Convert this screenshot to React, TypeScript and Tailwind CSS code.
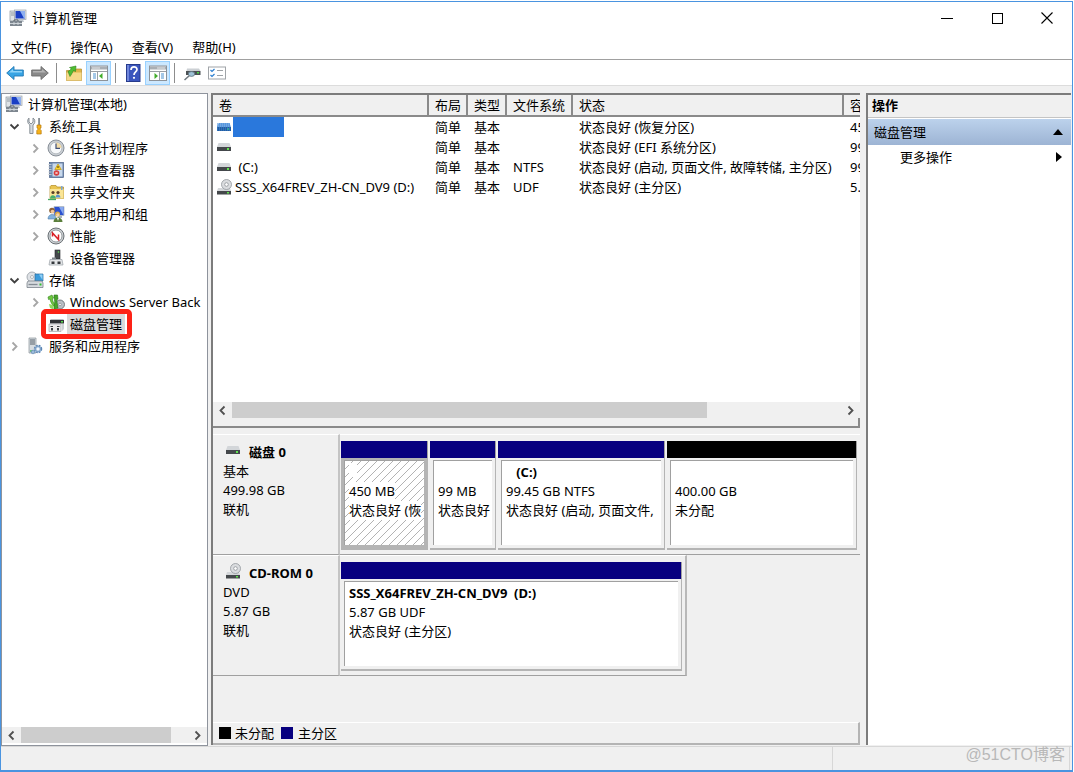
import type { ReactNode } from "react";
import clsx from "clsx";

type IconProps = { className?: string };

function Svg({ children, className = "h-[18px] w-[18px]" }: IconProps & { children: ReactNode }) {
  return (
    <svg viewBox="0 0 18 18" className={clsx("block shrink-0", className)} aria-hidden="true">
      {children}
    </svg>
  );
}

/* ---------- icons ---------- */

function ComputerIcon() {
  return (
    <Svg>
      <rect x="1" y="2" width="5" height="10" fill="#dfe3e6" stroke="#8b949c" strokeWidth=".7" />
      <path d="M2 4h3M2 6h3" stroke="#7a8590" strokeWidth=".8" />
      <rect x="5.500" y="1" width="11.500" height="9.500" fill="#e3e6e9" stroke="#9aa3ab" strokeWidth=".7" />
      <rect x="6.500" y="2" width="9.500" height="7.500" fill="#1a3fc4" />
      <path d="M11 2h5v7.500h-1z" fill="#8fb0f0" />
      <path d="M9 10.500h5l1 2.500H8z" fill="#bfc6cc" />
      <rect x="1" y="12" width="12" height="5" fill="#7d868f" />
      <path d="M5 12v-1h4v1" fill="none" stroke="#596169" />
      <path d="M1 14.500h12M5 13v3M9 13v3" stroke="#d5dadf" strokeWidth=".9" />
    </Svg>
  );
}

function ToolsIcon() {
  return (
    <Svg>
      <path d="M3 1v4l2 2 2-2V1c2 1 2.500 4 1 6L7 8v8.500H3.800V8C1 6 1.200 2.500 3 1z" fill="#d5dadf" stroke="#737c84" strokeWidth=".8" />
      <path d="M12.300 1h1.500v7h-1.500z" fill="#6d757d" />
      <path d="M11 8h4v3h-.8v1.500l1 1V17h-4.400v-3.500l1-1V11H11z" fill="#f6b21a" stroke="#b87a0b" strokeWidth=".7" />
    </Svg>
  );
}

function ClockIcon() {
  return (
    <Svg>
      <circle cx="9" cy="9" r="8" fill="#c9ced3" stroke="#7e868e" strokeWidth=".9" />
      <circle cx="9" cy="9" r="5.800" fill="#f7f9fb" stroke="#a2a9b0" strokeWidth=".6" />
      <path d="M9 9V3.500a5.500 5.500 0 0 1 5.500 5.500z" fill="#f3dca8" />
      <path d="M9 4.500V9.300h4" fill="none" stroke="#3f4f78" strokeWidth="1.200" />
    </Svg>
  );
}

function EventIcon() {
  return (
    <Svg>
      <rect x="2.500" y="1.500" width="14" height="15" fill="#6b87b0" stroke="#4a6288" strokeWidth=".7" />
      <rect x="5.500" y="2.500" width="10" height="13" fill="#c9d9ec" />
      <path d="M1.500 3.500h3M1.500 6h3M1.500 8.500h3M1.500 11h3M1.500 13.500h3" stroke="#c1c8cf" />
      <path d="M11 3l3.300 5.500H7.800z" fill="#ffd42a" stroke="#b98a00" strokeWidth=".6" />
      <path d="M11 5v2" stroke="#463600" />
      <circle cx="9.500" cy="12" r="2.800" fill="#d93a3a" />
      <path d="M8.400 10.900l2.200 2.200m0-2.200l-2.200 2.200" stroke="#fff" strokeWidth=".8" />
    </Svg>
  );
}

function SharedFolderIcon() {
  return (
    <Svg>
      <path d="M3 3.500l1-1h5l1 1.500h6.500v11.500H3z" fill="#e9c552" stroke="#b28b23" strokeWidth=".7" />
      <path d="M3 6h13.500v9.500H3z" fill="#fae596" />
      <path d="M14 3h1.500v4H14z" fill="#7ba7d8" />
      <circle cx="6" cy="9.500" r="1.600" fill="#5a4029" />
      <circle cx="11" cy="9.500" r="1.600" fill="#5a4029" />
      <path d="M3 15.500c0-4.500 5.500-4.500 6 0z" fill="#46b06d" />
      <path d="M8.500 14.500c0-4 4.500-4 5 0z" fill="#5b93cf" />
      <path d="M1 16.500h8" stroke="#47a860" strokeWidth="1.300" />
    </Svg>
  );
}

function UsersIcon() {
  return (
    <Svg>
      <path d="M7 1.500h10v9H7z" fill="#2a50cf" stroke="#b7bfc7" strokeWidth=".9" />
      <path d="M12 2h4.500v8z" fill="#87a8ef" />
      <path d="M11 11h4v2h-4z" fill="#aab2ba" />
      <circle cx="5" cy="5.500" r="2.800" fill="#8b6239" />
      <circle cx="5.500" cy="6.500" r="1.800" fill="#f0c79c" />
      <path d="M1 14c0-6 8-6 8 0z" fill="#84b2dd" stroke="#4a7baa" strokeWidth=".6" />
      <circle cx="10.500" cy="9" r="2.500" fill="#d8aa48" />
      <circle cx="10.800" cy="9.800" r="1.600" fill="#f3d2aa" />
      <path d="M6.500 17c0-6 9-6 9 0z" fill="#5b7f3c" />
      <path d="M10 13h2l-1 3z" fill="#fff" />
    </Svg>
  );
}

function PerformanceIcon() {
  return (
    <Svg>
      <circle cx="9" cy="9" r="8" fill="#cfd3d6" stroke="#696f74" strokeWidth="1" />
      <circle cx="9" cy="9" r="6" fill="#fff" stroke="#7f868c" strokeWidth=".8" />
      <path d="M5.500 9.500V6l6 6.500V7.500" fill="none" stroke="#d91f26" strokeWidth="1.500" />
    </Svg>
  );
}

function DeviceIcon() {
  return (
    <Svg>
      <rect x="8" y="1" width="5" height="9" fill="#45494d" stroke="#24272a" strokeWidth=".6" />
      <circle cx="11.500" cy="3" r=".8" fill="#5be050" />
      <path d="M5 8.500h4V11H5z" fill="#80878e" />
      <path d="M3 10.500h12l1 5.500H2z" fill="#e4e6e8" stroke="#9aa0a6" strokeWidth=".7" />
      <path d="M4.500 12.500h3V15h-3zM10.500 12.500h3V15h-3z" fill="#34383c" />
    </Svg>
  );
}

function StorageIcon() {
  return (
    <Svg>
      <circle cx="6" cy="6" r="5" fill="#dfe2e6" stroke="#969da4" strokeWidth=".8" />
      <circle cx="6" cy="6" r="1.500" fill="#fff" stroke="#969da4" strokeWidth=".7" />
      <path d="M9 3h8v7H9z" fill="#3b9bdb" stroke="#2a6c9e" strokeWidth=".7" />
      <path d="M13 3.500h3.500V9z" fill="#90cff5" />
      <path d="M2 10h14l1 2v4.500H1V12z" fill="#d6dade" stroke="#7b838b" strokeWidth=".8" />
      <path d="M2.500 13.500h9" stroke="#848c94" strokeWidth="1.300" />
      <path d="M13.500 12.500h2v2h-2z" fill="#2fbf2f" />
    </Svg>
  );
}

function BackupIcon() {
  return (
    <Svg>
      <circle cx="13" cy="11.500" r="4.500" fill="#b9bfc5" stroke="#5f666d" strokeWidth=".8" />
      <circle cx="13" cy="11.500" r="1.300" fill="#fff" stroke="#70777d" strokeWidth=".6" />
      <path d="M1 4l4-2 1.500 3-1 .5c0 2.500 1 4.500 3 6.500L8 14C5 12 3.500 9 3 6L1.500 6.500z" fill="#6fc93f" stroke="#32811c" strokeWidth=".6" />
      <path d="M7 2h3.500l.5 4-1.300 1 1.300 8-4 1.500V13c1-3 .8-6 0-8z" fill="#47a52a" stroke="#2c7219" strokeWidth=".6" />
      <path d="M2 11l4 1 .5 4.500L3 15z" fill="#91da5f" />
    </Svg>
  );
}

function DiskMgmtIcon() {
  return (
    <Svg>
      <path d="M4 4h12l1 1H3z" fill="#b9bec3" />
      <rect x="3" y="5" width="14" height="3.500" fill="#303336" />
      <path d="M14 6h2v1.500h-2z" fill="#55d94c" />
      <path d="M2 9h12v7.500H2z" fill="#ececec" stroke="#a4a8ac" strokeWidth=".7" />
      <path d="M3.500 11h2.500v1H3.500zM4 13h2v2.500H4zM10 11h2.500v1H10zM10 13h2v2.500h-2z" fill="#3b3f42" />
      <path d="M15 9h2v5l-2 2z" fill="#ccd0d4" />
    </Svg>
  );
}

function ServicesIcon() {
  return (
    <Svg>
      <path d="M3 1h7v15H3z" fill="#d6dce1" stroke="#89929a" strokeWidth=".7" />
      <path d="M4 3h5M4 5h5M4 7h5" stroke="#56616b" />
      <path d="M4 14h3" stroke="#35b335" strokeWidth="1.200" />
      <circle cx="12" cy="12" r="3.500" fill="#b9d2ec" stroke="#5d86b4" strokeWidth="1.500" strokeDasharray="1.800 1" />
      <circle cx="12" cy="12" r="2.500" fill="#cfe0f2" stroke="#5d86b4" strokeWidth=".7" />
      <circle cx="12" cy="12" r="1" fill="#fff" />
      <circle cx="7" cy="15" r="1.800" fill="#9bbbdc" stroke="#5d86b4" strokeWidth=".6" />
    </Svg>
  );
}

function DriveIcon({ selected = false }: { selected?: boolean }) {
  return (
    <svg viewBox="0 0 16 10" className="block h-[10px] w-4 shrink-0" aria-hidden="true">
      <path d="M2.500 1h11L15 5H1z" fill={selected ? "#72a7e2" : "#d3d6d9"} />
      <rect x="1" y="5" width="14" height="4" fill={selected ? "#245c9e" : "#44484b"} />
      <rect x="11" y="6" width="2" height="2" fill={selected ? "#2aa889" : "#5fe24f"} />
      {selected && <path d="M1 2h14M1 4h14M1 6h14M1 8h14" stroke="#3d86d8" strokeDasharray="1 1" />}
    </svg>
  );
}

function OpticalIcon() {
  return (
    <svg viewBox="0 0 16 16" className="block h-4 w-4 shrink-0" aria-hidden="true">
      <path d="M2 9h12l1 3H1z" fill="#d3d6d9" />
      <rect x="1" y="12" width="14" height="3.500" fill="#44484b" />
      <rect x="11" y="13" width="2" height="1.500" fill="#5fe24f" />
      <circle cx="10.500" cy="5.500" r="5" fill="#dadcdf" stroke="#93989d" strokeWidth=".8" />
      <circle cx="10.500" cy="5.500" r="1.800" fill="#fff" stroke="#8d9297" strokeWidth=".8" />
    </svg>
  );
}

function BackIcon() {
  return (
    <Svg>
      <path d="M.7 9L8 2.500V6h9.300v6H8v3.500z" fill="#37a4e4" stroke="#2378b4" strokeWidth=".9" />
      <path d="M3 8.500l4-3.500v2h9v1.500z" fill="#8fd3f7" />
    </Svg>
  );
}

function ForwardIcon() {
  return (
    <Svg>
      <path d="M17.300 9L10 2.500V6H.7v6H10v3.500z" fill="#8a8a8a" stroke="#6b6b6b" strokeWidth=".9" />
      <path d="M15 8.500L11 5v2H2v1.500z" fill="#b4b4b4" />
    </Svg>
  );
}

function UpFolderIcon() {
  return (
    <Svg>
      <path d="M1.500 6.500h8L11 5h5.500v11.500h-15z" fill="#dfb54a" stroke="#b18a2c" strokeWidth=".7" />
      <path d="M1.500 8.500h15v8h-15z" fill="#f5d98a" />
      <path d="M5 12.500c1-1.500 2.300-3.500 3.500-6L10.500 7.500 11 2 4.500 3.500l1.700 1C5.500 6 4 7 3 7.500z" fill="#4fbd33" stroke="#2c851a" strokeWidth=".6" />
    </Svg>
  );
}

function PaneIcon({ flip = false }: { flip?: boolean }) {
  return (
    <Svg>
      <g transform={flip ? "translate(18 0) scale(-1 1)" : undefined}>
        <rect x=".5" y="2" width="17" height="14.500" fill="#fff" stroke="#8d9298" />
        <rect x="1" y="2.500" width="16" height="3" fill="#a9aeb3" />
        <path d="M2 4h8" stroke="#e4e7ea" />
        <path d="M1 7.500h16M7.500 8v8" stroke="#9a9fa5" />
        <path d="M3 10h3M3 12h3M3 14h3" stroke="#4b91cf" />
        <path d="M12.500 9v6L9 12z" fill="#42ad2b" />
      </g>
    </Svg>
  );
}

function HelpIcon() {
  return (
    <Svg>
      <rect x="2.500" y=".5" width="13.500" height="17" fill="#3a55bd" stroke="#263b8c" />
      <path d="M3 1h2v16H3z" fill="#6f86db" />
      <path d="M7 6c0-4 6-4 6-.5C13 8 10 8 10 11" fill="none" stroke="#fff" strokeWidth="1.700" />
      <circle cx="10" cy="13.800" r="1.100" fill="#fff" />
    </Svg>
  );
}

function RefreshDiskIcon() {
  return (
    <Svg>
      <path d="M4 4.500h12l1.500 2.500h-14z" fill="#ccd0d4" />
      <rect x="3" y="7" width="14.500" height="4" fill="#4b5054" />
      <path d="M14 8h2v1.500h-2z" fill="#4dd747" />
      <ellipse cx="8.500" cy="10" rx="3.200" ry="2.400" fill="#9fc3d8" stroke="#62737f" strokeWidth=".8" />
      <path d="M6.200 11.800L1.500 16" stroke="#6d767d" strokeWidth="1.500" />
    </Svg>
  );
}

function ChecklistIcon() {
  return (
    <Svg>
      <rect x=".5" y="3" width="17" height="12" fill="#fff" stroke="#a0a4a8" />
      <path d="M2.500 6l1.500 1.500L6.500 5M2.500 11L4 12.500 6.500 10" fill="none" stroke="#2c7fd0" strokeWidth="1.200" />
      <path d="M9 6.500h6M9 11.500h6" stroke="#9da2a6" />
    </Svg>
  );
}

function Chevron({ dir, className = "text-[#505050]" }: { dir: "left" | "right" | "down"; className?: string }) {
  const d = { left: "M7.500 1.500l-4 4 4 4", right: "M3.500 1.500l4 4-4 4", down: "M1.500 3.500l4 4 4-4" }[dir];
  return (
    <svg viewBox="0 0 11 11" className={clsx("block h-[11px] w-[11px]", className)} aria-hidden="true">
      <path d={d} fill="none" stroke="currentColor" strokeWidth="1.800" />
    </svg>
  );
}

/* ---------- data ---------- */

type TreeNode = { level: 0 | 1 | 2; label: string; icon: ReactNode; open?: boolean; leaf?: boolean; selected?: boolean };

const tree: TreeNode[] = [
  { level: 0, label: "计算机管理(本地)", icon: <ComputerIcon />, leaf: true },
  { level: 1, label: "系统工具", icon: <ToolsIcon />, open: true },
  { level: 2, label: "任务计划程序", icon: <ClockIcon /> },
  { level: 2, label: "事件查看器", icon: <EventIcon /> },
  { level: 2, label: "共享文件夹", icon: <SharedFolderIcon /> },
  { level: 2, label: "本地用户和组", icon: <UsersIcon /> },
  { level: 2, label: "性能", icon: <PerformanceIcon /> },
  { level: 2, label: "设备管理器", icon: <DeviceIcon />, leaf: true },
  { level: 1, label: "存储", icon: <StorageIcon />, open: true },
  { level: 2, label: "Windows Server Back", icon: <BackupIcon /> },
  { level: 2, label: "磁盘管理", icon: <DiskMgmtIcon />, leaf: true, selected: true },
  { level: 1, label: "服务和应用程序", icon: <ServicesIcon /> },
];

const volumes = [
  { name: "", fs: "", status: "状态良好 (恢复分区)", size: "45", selected: true },
  { name: "", fs: "", status: "状态良好 (EFI 系统分区)", size: "99" },
  { name: " (C:)", fs: "NTFS", status: "状态良好 (启动, 页面文件, 故障转储, 主分区)", size: "99" },
  { name: "SSS_X64FREV_ZH-CN_DV9 (D:)", fs: "UDF", status: "状态良好 (主分区)", size: "5.", optical: true },
];

type Partition = { grow: number; name?: string; size: string; status: string; free?: boolean; selected?: boolean };

const disk0: Partition[] = [
  { grow: 87, size: "450 MB", status: "状态良好 (恢", selected: true },
  { grow: 66, size: "99 MB", status: "状态良好" },
  { grow: 167, name: "   (C:)", size: "99.45 GB NTFS", status: "状态良好 (启动, 页面文件," },
  { grow: 190, size: "400.00 GB", status: "未分配", free: true },
];

const cdrom: Partition[] = [
  { grow: 1, name: "SSS_X64FREV_ZH-CN_DV9  (D:)", size: "5.87 GB UDF", status: "状态良好 (主分区)" },
];

/* ---------- pieces ---------- */

function ToolButton({ label, pressed, children }: { label: string; pressed?: boolean; children: ReactNode }) {
  return (
    <button
      type="button"
      aria-label={label}
      className={clsx("flex h-6 w-[25px] items-center justify-center", pressed && "border border-[#99d1ff] bg-[#cce8ff]")}
    >
      {children}
    </button>
  );
}

function Separator() {
  return <span className="mx-1 h-5 w-px bg-[#8d8d8d]" />;
}

function ScrollBar({ thumb }: { thumb: string }) {
  return (
    <div className="flex h-4 shrink-0 bg-[#f0f0f0]">
      <button type="button" aria-label="向左滚动" className="flex w-[19px] items-center justify-center">
        <Chevron dir="left" />
      </button>
      <div className="flex flex-1">
        <div className={clsx("bg-[#cdcdcd]", thumb)} />
      </div>
      <button type="button" aria-label="向右滚动" className="flex w-[19px] items-center justify-center">
        <Chevron dir="right" />
      </button>
    </div>
  );
}

function TreeRow({ node }: { node: TreeNode }) {
  return (
    <li className={clsx("relative flex h-[22px] items-center", node.level === 2 ? "pl-[25px]" : "pl-1")}>
      {node.level > 0 && (
        <span className="mr-[3px] flex w-[18px] shrink-0 justify-center">
          {!node.leaf && (
            <Chevron dir={node.open ? "down" : "right"} className={node.open ? "text-[#404040]" : "text-[#a6a6a6]"} />
          )}
        </span>
      )}
      {node.icon}
      <a
        href="#"
        className={clsx("ml-[2px] whitespace-nowrap px-[3px] leading-5", node.selected && "bg-[#d9d9d9]")}
      >
        {node.label}
      </a>
      {node.selected && (
        <span className="pointer-events-none absolute -top-1 left-10 h-[30px] w-[91px] rounded-[5px] border-[5px] border-[#fd2216]" />
      )}
    </li>
  );
}

function VolumeTable() {
  const head = "h-5 overflow-hidden border-b-2 border-[#8a8a8a] pl-[6px] text-left font-normal";
  const cell = "overflow-hidden p-0 pl-[6px]";
  return (
    <table className="w-full table-fixed border-separate border-spacing-0 whitespace-nowrap">
      <colgroup>
        <col className="w-[216px]" />
        <col className="w-[39px]" />
        <col className="w-[39px]" />
        <col className="w-[66px]" />
        <col className="w-[271px]" />
        <col />
      </colgroup>
      <thead className="bg-[#f0f0f0]">
        <tr>
          {["卷", "布局", "类型", "文件系统", "状态"].map((h) => (
            <th key={h} className={clsx(head, "border-r-2")}>{h}</th>
          ))}
          <th className={head}>容</th>
        </tr>
      </thead>
      <tbody>
        {volumes.map((v, i) => (
          <tr key={i} className="h-5">
            <td className="overflow-hidden p-0 pl-[3px]">
              <div className="flex h-5 items-center">
                {v.optical ? <OpticalIcon /> : <DriveIcon selected={v.selected} />}
                {v.selected ? (
                  <span className="ml-px h-5 w-[51px] bg-[#2a78dc]" />
                ) : (
                  <span className="whitespace-pre pl-[3px]">{v.name}</span>
                )}
              </div>
            </td>
            <td className={cell}>简单</td>
            <td className={cell}>基本</td>
            <td className={cell}>{v.fs}</td>
            <td className={cell}>{v.status}</td>
            <td className={cell}>{v.size}</td>
          </tr>
        ))}
      </tbody>
    </table>
  );
}

function Hatch() {
  return (
    <svg className="absolute inset-0 h-full w-full" aria-hidden="true">
      <defs>
        <pattern id="hatch" width="8" height="8" patternUnits="userSpaceOnUse">
          <path d="M-1 9L9-1M-1 1l2-2M7 9l2-2" stroke="#a0a0a0" strokeWidth=".8" />
        </pattern>
      </defs>
      <rect width="100%" height="100%" fill="url(#hatch)" />
    </svg>
  );
}

function PartitionBox({ part }: { part: Partition }) {
  return (
    <div className="flex min-w-0 basis-0 flex-col" style={{ flexGrow: part.grow }}>
      <div className={clsx("h-[17px] border-r border-[#a0a0a0]", part.free ? "bg-black" : "bg-[#08007f]")} />
      <div
        className={clsx(
          "flex flex-1 flex-col border-b-2 border-r border-[#b4b4b4] p-[3px] pt-[2px]",
          part.selected ? "bg-[#b4b4b4]" : "bg-[#f0f0f0]",
        )}
      >
        <div className="relative flex-1 overflow-hidden whitespace-pre border-l border-t border-[#a0a0a0] bg-white pl-1 pt-[2px] leading-[19px]">
          {part.selected && <Hatch />}
          <p className="relative h-[19px] font-bold">
            {part.name ?? <span className="inline-block h-[14px] w-2 bg-white" />}
          </p>
          <p className="relative">
            <span className="inline-block bg-white">{part.size}</span>
          </p>
          <p className="relative">
            <span className="inline-block bg-white">{part.status}</span>
          </p>
        </div>
      </div>
    </div>
  );
}

type DiskRowProps = { icon: ReactNode; name: string; lines: string[]; parts: Partition[]; narrow?: boolean };

function DiskRow({ icon, name, lines, parts, narrow }: DiskRowProps) {
  return (
    <section className="flex h-[121px]">
      <div className="w-[127px] shrink-0 border-b border-r-2 border-t border-b-[#a0a0a0] border-r-[#c4c4c4] border-t-white pl-[10px] pt-2 leading-[19px]">
        <h3 className="flex h-[19px] items-center font-bold">
          <span className="mb-[6px] mr-2 ml-[2px]">{icon}</span>
          {name}
        </h3>
        {lines.map((l) => (
          <p key={l}>{l}</p>
        ))}
      </div>
      <div className="flex min-w-0 flex-1">
        <div
          className={clsx(
            "flex min-w-0 gap-[2px] border-b border-t border-b-[#a0a0a0] border-t-white pb-1 pl-px pr-[3px] pt-[6px]",
            narrow ? "w-2/3 border-r-2 border-r-[#b8b8b8]" : "flex-1",
          )}
        >
          {parts.map((p) => (
            <PartitionBox key={p.size} part={p} />
          ))}
        </div>
      </div>
    </section>
  );
}

/* ---------- window ---------- */

export default function App() {
  return (
    <div className="h-screen min-h-[600px] bg-white pr-px pt-px font-['Noto_Sans','Noto_Sans_CJK_SC',sans-serif] text-[13px] leading-5 text-black">
      <div className="flex h-full flex-col border border-[#4a94e0] border-b-2">
        <header className="flex h-8 shrink-0 items-center pl-2">
          <ComputerIcon />
          <h1 className="ml-[5px] flex-1">计算机管理</h1>
          <button type="button" aria-label="最小化" className="flex h-8 w-[50px] items-center justify-center">
            <span className="h-px w-3 bg-black" />
          </button>
          <button type="button" aria-label="最大化" className="flex h-8 w-[50px] items-center justify-center">
            <span className="h-[11px] w-[11px] border border-black" />
          </button>
          <button type="button" aria-label="关闭" className="flex h-8 w-[50px] items-center justify-center">
            <svg viewBox="0 0 12 12" className="h-3 w-3" aria-hidden="true">
              <path d="M.5.5l11 11m0-11l-11 11" stroke="#000" strokeWidth="1.100" />
            </svg>
          </button>
        </header>

        <nav className="flex h-[26px] shrink-0 items-center gap-[19px] border-b border-[#a0a0a0] pl-[10px]">
          <button type="button">文件(F)</button>
          <button type="button">操作(A)</button>
          <button type="button">查看(V)</button>
          <button type="button">帮助(H)</button>
        </nav>

        <div className="flex h-[26px] shrink-0 items-center border-b border-[#dcdcdc] pl-px">
          <ToolButton label="后退"><BackIcon /></ToolButton>
          <ToolButton label="前进"><ForwardIcon /></ToolButton>
          <Separator />
          <ToolButton label="上一级"><UpFolderIcon /></ToolButton>
          <ToolButton label="显示/隐藏控制台树" pressed><PaneIcon /></ToolButton>
          <Separator />
          <ToolButton label="帮助"><HelpIcon /></ToolButton>
          <ToolButton label="显示/隐藏操作窗格" pressed><PaneIcon flip /></ToolButton>
          <Separator />
          <ToolButton label="刷新"><RefreshDiskIcon /></ToolButton>
          <ToolButton label="设置"><ChecklistIcon /></ToolButton>
        </div>

        <main className="flex min-h-0 flex-1 bg-[#f0f0f0] pt-[7px]">
          <aside className="flex w-[207px] shrink-0 flex-col justify-between bg-white shadow-[inset_0_0_0_1px_#8e939c]">
            <ul className="mr-px overflow-hidden">
              {tree.map((n) => (
                <TreeRow key={n.label} node={n} />
              ))}
            </ul>
            <div className="mx-px mb-[3px]">
              <ScrollBar thumb="w-[90%]" />
            </div>
          </aside>

          <div className="mb-px ml-[3px] flex min-w-0 flex-1 flex-col border-l-2 border-t-2 border-[#7c7c7c]">
            <div className="flex h-[307px] shrink-0 flex-col overflow-hidden bg-white">
              <VolumeTable />
            </div>
            <ScrollBar thumb="w-[78%]" />
            <div className="h-[10px] shrink-0 border-b-2 border-r-2 border-[#8a8a8a]" />
            <div className="pt-[6px]">
              <DiskRow
                icon={<DriveIcon />}
                name="磁盘 0"
                lines={["基本", "499.98 GB", "联机"]}
                parts={disk0}
              />
              <DiskRow
                icon={<OpticalIcon />}
                name="CD-ROM 0"
                lines={["DVD", "5.87 GB", "联机"]}
                parts={cdrom}
                narrow
              />
            </div>
            <footer className="mt-auto flex h-[23px] items-center border-b-2 border-r-2 border-t border-b-[#b4b4b4] border-r-[#b4b4b4] border-t-white pl-[6px]">
              <span className="mr-1 h-3 w-3 bg-black" />
              未分配
              <span className="ml-[7px] mr-[5px] h-3 w-3 bg-[#08007f]" />
              主分区
            </footer>
          </div>

          <aside className="mb-px ml-[6px] mr-px w-[205px] shrink-0 border-l-2 border-t-2 border-[#7c7c7c] bg-white">
            <h2 className="h-[23px] border-b border-[#c4c4c4] bg-[#f0f0f0] pl-1 font-bold leading-[21px]">操作</h2>
            <div className="mt-px flex h-[26px] items-center justify-between bg-gradient-to-b from-[#bcd2ec] to-[#9db4d4] pl-[6px] pr-2">
              磁盘管理
              <svg viewBox="0 0 10 6" className="h-[6px] w-[10px]" aria-hidden="true">
                <path d="M0 6l5-6 5 6z" />
              </svg>
            </div>
            <button type="button" className="flex h-6 w-full items-center justify-between pl-8 pr-[9px]">
              更多操作
              <svg viewBox="0 0 6 10" className="h-[10px] w-[6px]" aria-hidden="true">
                <path d="M0 0l6 5-6 5z" />
              </svg>
            </button>
          </aside>
        </main>

        <div className="flex h-6 shrink-0 justify-end border-t border-[#d7d7d7] bg-[#f0f0f0] pr-[2px]">
          <div className="flex h-full w-[238px] items-start justify-end border-l border-r border-[#d7d7d7] pr-1 font-['Liberation_Sans','Noto_Sans_CJK_SC',sans-serif] text-base leading-4 text-[#b8b8b8]">
            @51CTO博客
          </div>
        </div>
      </div>
    </div>
  );
}
